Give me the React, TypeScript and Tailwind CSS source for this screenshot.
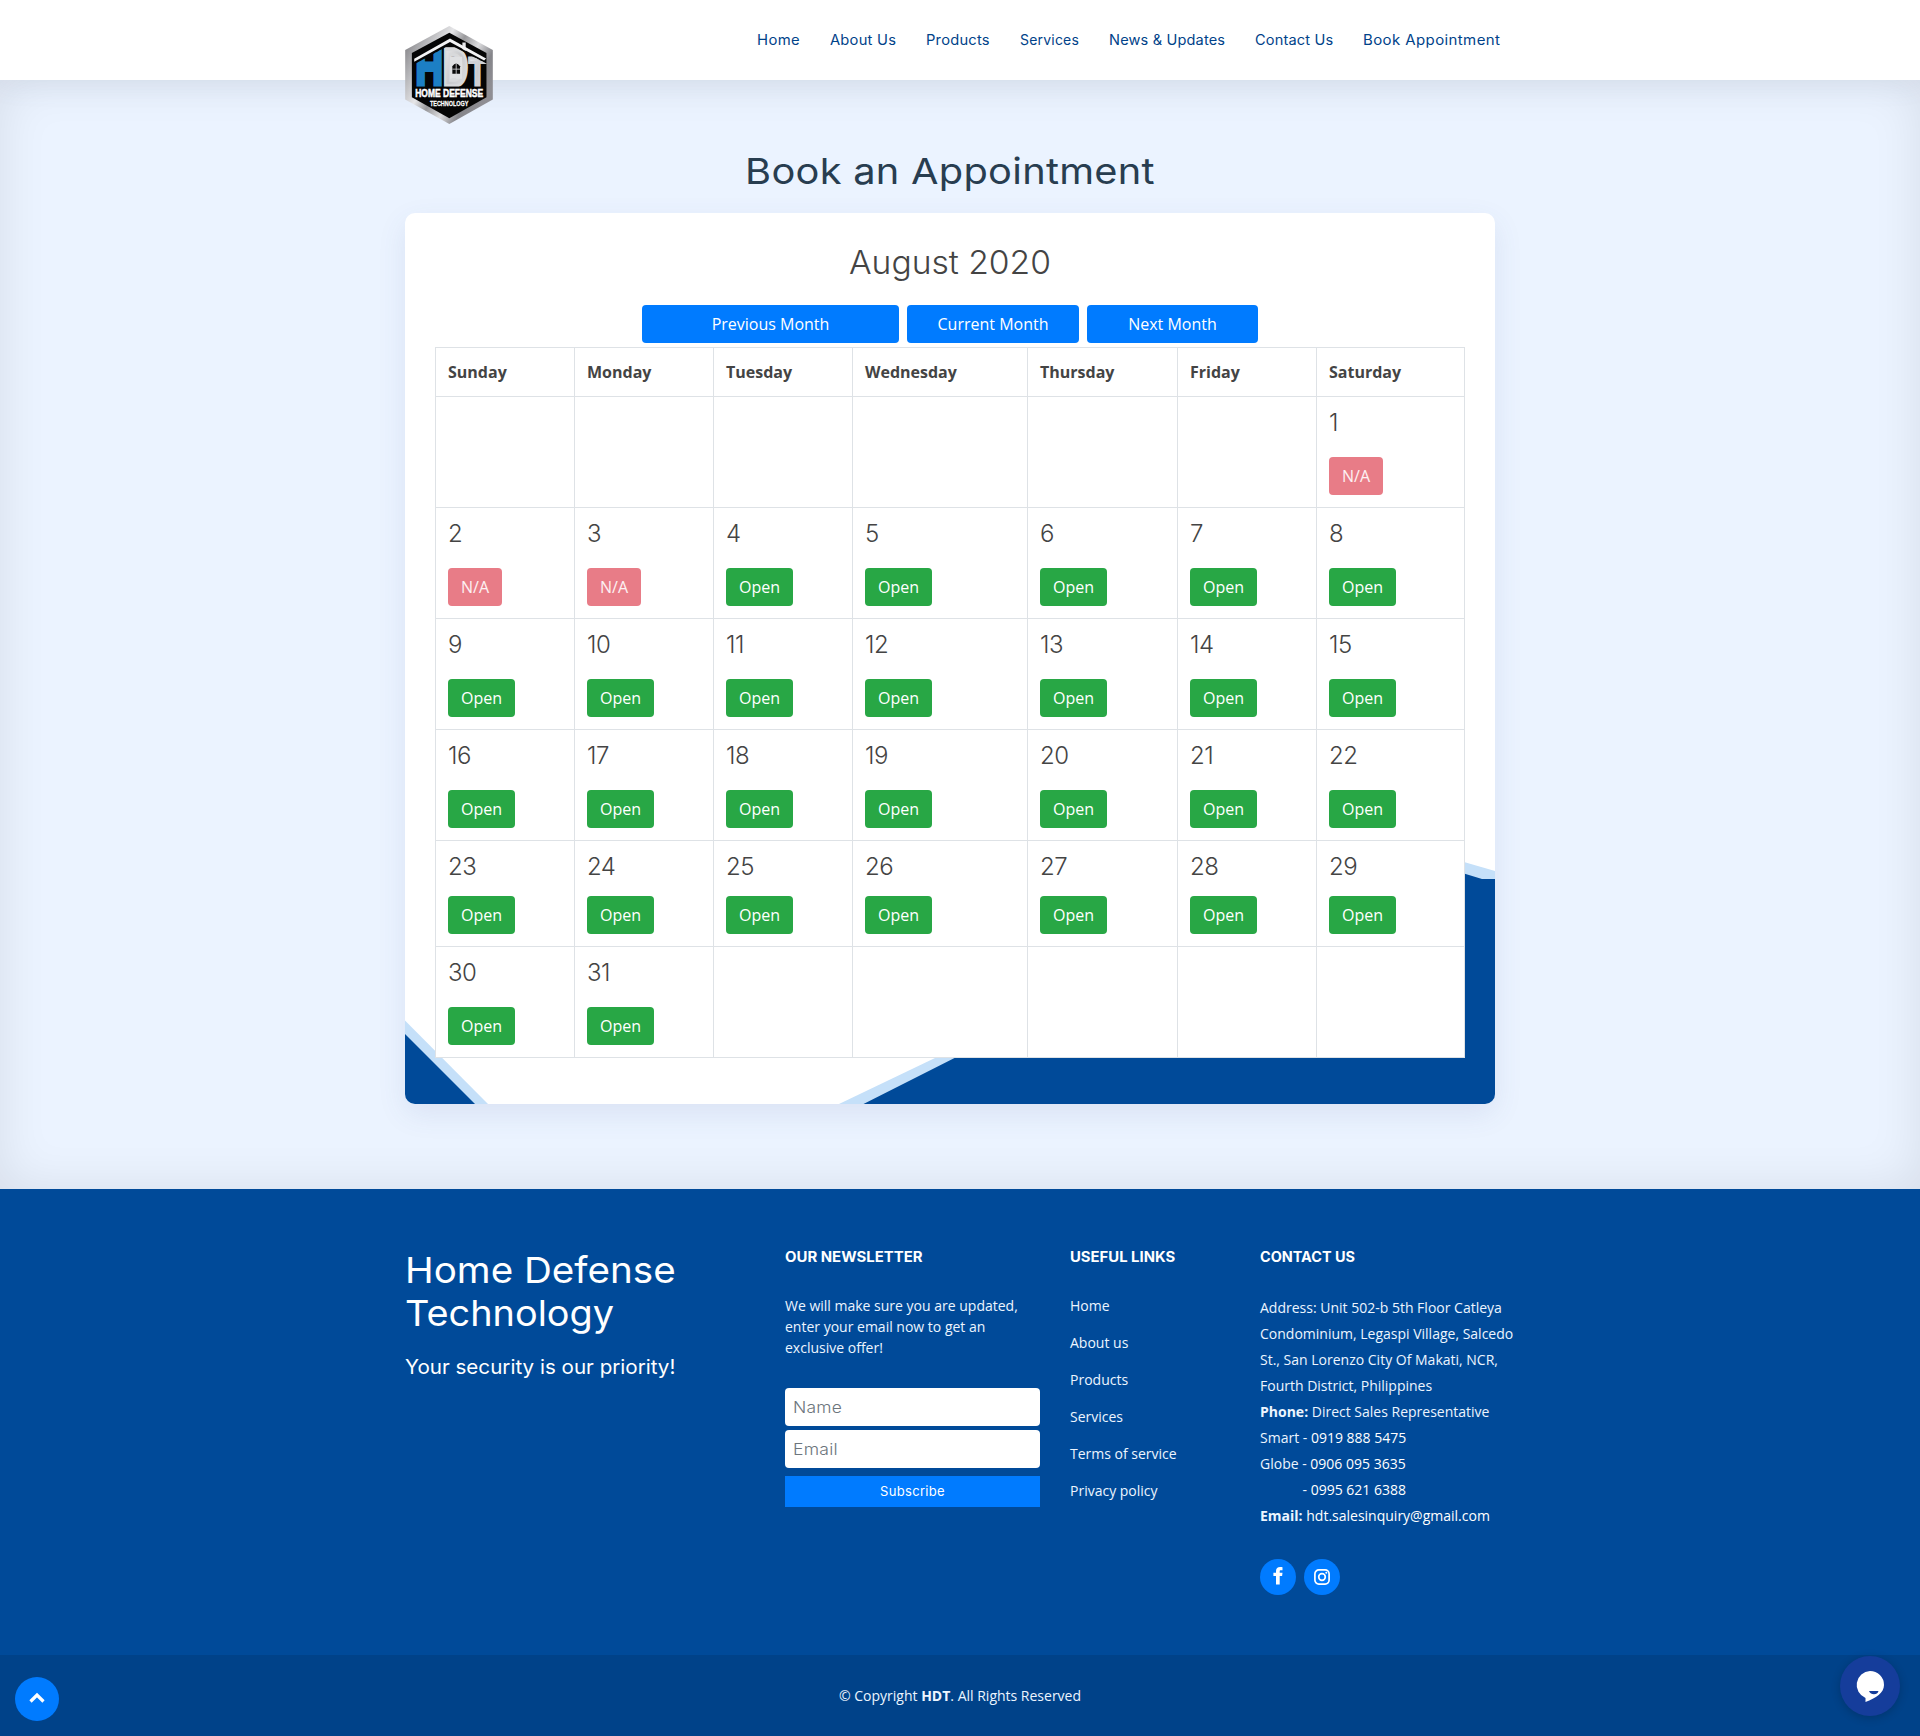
import React from "react";

const NAV: [string, string][] = [
  ["Home", "w-[43px] scale-x-[1.06] tracking-[0.35px]"],
  ["About Us", "w-[66px] scale-x-[1.05] tracking-[0.22px]"],
  ["Products", "w-[64px] scale-x-[1.05] tracking-[0.22px]"],
  ["Services", "w-[59px] tracking-[0.2px]"],
  ["News & Updates", "w-[116px] scale-x-[1.04] tracking-[0.15px]"],
  ["Contact Us", "w-[78px] scale-x-[1.04] tracking-[0.15px]"],
  ["Book Appointment", "w-[137px] scale-x-[1.07] tracking-[0.38px]"],
];

const DAYS = ["Sunday", "Monday", "Tuesday", "Wednesday", "Thursday", "Friday", "Saturday"];

// August 2020 starts on a Saturday; 0 marks an empty cell
const CELLS: number[] = Array.from({ length: 42 }, (_, i) => (i >= 6 && i < 37 ? i - 5 : 0));

const LINKS = ["Home", "About us", "Products", "Services", "Terms of service", "Privacy policy"];

function Logo() {
  return (
    <svg viewBox="46 50 262 293" className="h-[98px] w-[88px] overflow-visible">
      <defs>
        <linearGradient id="steel" x1="0" y1="0" x2="1" y2="0.6">
          <stop offset="0" stopColor="#6d6c70" />
          <stop offset="0.2" stopColor="#a9a9ac" />
          <stop offset="0.42" stopColor="#e6e6e8" />
          <stop offset="0.55" stopColor="#98989b" />
          <stop offset="0.7" stopColor="#dcdcde" />
          <stop offset="0.85" stopColor="#85858a" />
          <stop offset="1" stopColor="#8f8e93" />
        </linearGradient>
        <linearGradient id="silver" x1="0" y1="0" x2="1" y2="1">
          <stop offset="0" stopColor="#f2f2f3" />
          <stop offset="0.5" stopColor="#c9cacd" />
          <stop offset="1" stopColor="#e3e4e6" />
        </linearGradient>
        <clipPath id="roof">
          <polygon points="60,172 180,106 300,168 300,232 60,232" />
        </clipPath>
      </defs>
      <polygon points="178,50 308,122 308,270 178,343 46,270 46,122" fill="url(#steel)" />
      <polygon points="178,70 289,131 289,263 178,326 66,263 66,131" fill="#050505" />
      <g clipPath="url(#roof)" fontFamily="Liberation Sans" fontWeight="700">
        <text x="77" y="230" fontSize="160" fill="#1c7fc4" stroke="#1c7fc4" strokeWidth="12" textLength="82" lengthAdjust="spacingAndGlyphs">H</text>
        <text x="158" y="228" fontSize="160" fill="url(#silver)" stroke="#d8d9db" strokeWidth="10" textLength="76" lengthAdjust="spacingAndGlyphs">D</text>
        <text x="236" y="230" fontSize="124" fill="url(#silver)" stroke="#d0d1d4" strokeWidth="9" textLength="52" lengthAdjust="spacingAndGlyphs">T</text>
      </g>
      <rect x="180" y="142" width="36" height="66" fill="#dfe0e2" />
      <path d="M187 193V170q11-16 23 0v23z" fill="#0a0a0a" />
      <path d="M198.500 162v32M187 179h23" stroke="#d5d6d8" strokeWidth="2.500" />
      <path d="M217 108v-9h10v26l-10-6z" fill="#e8e8ea" />
      <path d="M73 148L180 87l108 60-6 6L180 98 73 157z" fill="#f3f3f4" />
      <g fontFamily="Liberation Sans Narrow, Liberation Sans" fontWeight="700" fill="#fff" stroke="#fff">
        <text x="76" y="263" fontSize="35" strokeWidth="1.600" textLength="203" lengthAdjust="spacingAndGlyphs">HOME DEFENSE</text>
        <text x="120" y="288" fontSize="24" strokeWidth="0.800" textLength="115" lengthAdjust="spacingAndGlyphs">TECHNOLOGY</text>
      </g>
    </svg>
  );
}

function CardBackdrop() {
  return (
    <svg viewBox="0 0 1090 891" className="absolute inset-0 h-full w-full">
      <polygon points="0,807.500 83,891 0,891" fill="#c5e0f9" />
      <polygon points="0,821 70,891 0,891" fill="#004a99" />
      <polygon points="434,891 530,845 1059,649 1090,658 1090,891" fill="#c5e0f9" />
      <polygon points="458.500,891 550.500,844.500 1059,660.500 1077,666 1090,666 1090,891" fill="#004a99" />
    </svg>
  );
}

function DayCell({ day, row }: { day: number; row: number }) {
  const closed = day > 0 && day <= 3;
  return (
    <div className="border-l border-t border-[#dee2e6] bg-white px-3 pt-3">
      {day > 0 && (
        <>
          <div className="font-[Inter] text-[24px] font-light leading-[27px] tracking-[-0.5px]">{day}</div>
          <div className={row === 4 ? "mt-4" : "mt-[21px]"}>
            {closed ? (
              <button className="h-[38px] w-[54px] rounded bg-[#e87c87] text-white/90">N/A</button>
            ) : (
              <button className="h-[38px] w-[67px] rounded bg-[#28a745] text-white">Open</button>
            )}
          </div>
        </>
      )}
    </div>
  );
}

export default function App() {
  return (
    <div className="relative h-[1736px] w-[1920px] overflow-hidden bg-white font-['Open_Sans',sans-serif] text-[16px] leading-6 text-[#444]">
      <header className="relative z-10 flex h-20 bg-white pl-[405px] pr-[420px] shadow-[0_0_30px_rgba(127,137,161,0.12)]">
        <div className="mt-[26px] h-[98px] w-[88px]">
          <Logo />
        </div>
        <nav className="ml-auto flex gap-[30px] font-[Inter] text-[14px] leading-[80px] text-[#004289]">
          {NAV.map(([label, cls]) => (
            <a key={label} className={`origin-left whitespace-nowrap ${cls}`}>
              {label}
            </a>
          ))}
        </nav>
      </header>

      <main className="h-[1109px] bg-[#ebf3ff] px-[405px] pt-[70px] shadow-[inset_0_0_50px_rgba(0,0,0,0.09)]">
        <div className="w-[1090px]">
          <h1 className="scale-x-[1.105] text-center font-[Inter] text-[36px] font-normal leading-[43px] tracking-[0.25px] text-[#283d50]">
            Book an Appointment
          </h1>
          <section className="relative mt-5 h-[891px] overflow-hidden rounded-[10px] bg-white shadow-[0_10px_29px_rgba(68,88,144,0.1)]">
            <CardBackdrop />
            <div className="relative px-[30px] pt-[30px]">
              <h2 className="scale-x-[1.05] pt-px text-center font-[Inter] text-[32px] font-light leading-[38px]">August 2020</h2>
              <div className="mt-[23px] flex justify-center gap-2 text-white">
                <button className="h-[38px] w-[257px] rounded bg-[#007bff]">Previous Month</button>
                <button className="h-[38px] w-[172px] rounded bg-[#007bff]">Current Month</button>
                <button className="h-[38px] w-[171px] rounded bg-[#007bff]">Next Month</button>
              </div>
              <div className="mt-1 grid grid-cols-[139px_139px_139px_175px_150px_139px_148px] grid-rows-[49px_111px_111px_111px_111px_106px_111px] border-b border-r border-[#dee2e6]">
                {DAYS.map((d) => (
                  <div key={d} className="border-l border-t border-[#dee2e6] bg-white px-3 pt-3 font-bold">
                    {d}
                  </div>
                ))}
                {CELLS.map((day, i) => (
                  <DayCell key={i} day={day} row={Math.floor(i / 7)} />
                ))}
              </div>
            </div>
          </section>
        </div>
      </main>

      <footer className="bg-[#004a99] text-[14px] text-white">
        <div className="flex h-[466px] pl-[405px] pt-[59px]">
          <div className="w-[380px] pt-px font-[Inter]">
            <h3 className="text-[36px] leading-[43px]">
              <span className="block origin-left scale-x-[1.072]">Home Defense</span>
              <span className="block origin-left scale-x-[1.052]">Technology</span>
            </h3>
            <p className="mt-5 origin-left scale-x-[1.03] text-[20px] leading-6">Your security is our priority!</p>
          </div>

          <div className="w-[285px]">
            <h4 className="origin-left scale-x-[1.065] font-[Inter] font-bold leading-[17px]">OUR NEWSLETTER</h4>
            <p className="mt-[30px] w-[245px] leading-[21px] text-[#ecf5ff]">
              We will make sure you are updated, enter your email now to get an exclusive offer!
            </p>
            <div className="mt-[30px] flex w-[255px] flex-col font-[Inter] text-[16px] font-light text-[#6c757d]">
              <div className="h-[38px] rounded bg-white px-2 leading-[38px]">
                <span className="inline-block origin-left scale-x-[1.09] tracking-[0.2px]">Name</span>
              </div>
              <div className="mt-1 h-[38px] rounded bg-white px-2 leading-[38px]">
                <span className="inline-block origin-left scale-x-[1.1] tracking-[0.2px]">Email</span>
              </div>
              <button className="mt-2 h-[31px] bg-[#007bff] pb-px text-[13px] font-normal tracking-[0.33px] text-white">Subscribe</button>
            </div>
          </div>

          <div className="w-[190px]">
            <h4 className="origin-left scale-x-[1.06] font-[Inter] font-bold leading-[17px]">USEFUL LINKS</h4>
            <ul className="mt-8 flex flex-col gap-5 leading-[17px] text-[#ecf5ff]">
              {LINKS.map((l) => (
                <li key={l}>{l}</li>
              ))}
            </ul>
          </div>

          <div>
            <h4 className="origin-left scale-x-[1.03] font-[Inter] font-bold leading-[17px]">CONTACT US</h4>
            <p className="mt-[30px] whitespace-nowrap leading-[26px] text-[#ecf5ff]">
              Address: Unit 502-b 5th Floor Catleya
              <br />
              Condominium, Legaspi Village, Salcedo
              <br />
              St., San Lorenzo City Of Makati, NCR,
              <br />
              Fourth District, Philippines
              <br />
              <b>Phone:</b> Direct Sales Representative
              <br />
              Smart - <span className="text-white">0919 888 5475</span>
              <br />
              Globe - <span className="text-white">0906 095 3635</span>
              <br />
              <span className="pl-[42.5px]">- </span>
              <span className="text-white">0995 621 6388</span>
              <br />
              <b>Email:</b> <span className="text-white">hdt.salesinquiry@gmail.com</span>
            </p>
            <div className="mt-[30px] flex gap-2">
              <span className="flex h-9 w-9 items-center justify-center rounded-full bg-[#007bff]">
                <svg viewBox="0 0 10 18" className="mb-[2px] h-[18px] w-[10px]" fill="#fff">
                  <path d="M9.500.2v3.100H7.900c-1.100 0-1.200.5-1.200 1.200v1.300h2.800l-.4 3.200H6.700V17.500H3V9H.4V5.800H3V3.900C3 1.400 4.600 0 7.100 0c1.100 0 2 .1 2.400.2z" />
                </svg>
              </span>
              <span className="flex h-9 w-9 items-center justify-center rounded-full bg-[#007bff]">
                <svg viewBox="0 0 16 16" className="mb-px h-4 w-4" fill="none" stroke="#fff">
                  <rect x="0.900" y="0.900" width="14.200" height="14.200" rx="4" strokeWidth="1.700" />
                  <circle cx="8" cy="8" r="3.300" strokeWidth="1.700" />
                  <circle cx="12.300" cy="3.700" r="1" fill="#fff" stroke="none" />
                </svg>
              </span>
            </div>
          </div>
        </div>
        <div className="h-[81px] bg-[#004289] text-center leading-[81px] text-[#ecf5ff]">
          © Copyright <b>HDT</b>. All Rights Reserved
        </div>
      </footer>

      <a className="absolute bottom-[15px] left-[15px] flex h-11 w-11 items-center justify-center rounded-full bg-[#007bff]">
        <svg viewBox="0 0 16 12" className="mb-[2px] h-3 w-4" fill="none" stroke="#fff" strokeWidth="3.200">
          <path d="M1.500 9.500L8 3l6.500 6.500" />
        </svg>
      </a>
      <a className="absolute bottom-5 right-5 h-[60px] w-[60px] rounded-full bg-[#153d9b] shadow-[0_2px_10px_rgba(0,0,0,0.2)]">
        <svg viewBox="0 0 60 60" className="h-full w-full">
          <path d="M30 15a14 14 0 0 1 14 14c0 8-8 13-18.500 17v-4A14 14 0 0 1 30 15z" fill="#fff" />
          <path d="M29 35h9.500q-1 3.300-4.500 3.300T29 35z" fill="#153d9b" />
        </svg>
      </a>
    </div>
  );
}
